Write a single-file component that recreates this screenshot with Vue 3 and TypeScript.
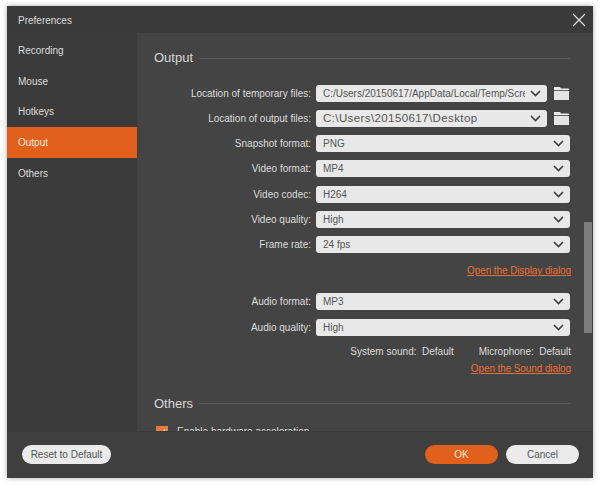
<script setup lang="ts">
const nav = ['Recording', 'Mouse', 'Hotkeys', 'Output', 'Others']
const videoRows = [
  { label: 'Snapshot format:', value: 'PNG' },
  { label: 'Video format:', value: 'MP4' },
  { label: 'Video codec:', value: 'H264' },
  { label: 'Video quality:', value: 'High' },
  { label: 'Frame rate:', value: '24 fps' },
]
const audioRows = [
  { label: 'Audio format:', value: 'MP3' },
  { label: 'Audio quality:', value: 'High' },
]
const pathRows = [
  { label: 'Location of temporary files:', value: 'C:/Users/20150617/AppData/Local/Temp/Scre', kind: 'long' },
  { label: 'Location of output files:', value: 'C:\\Users\\20150617\\Desktop', kind: 'wide' },
]
</script>

<template>
  <div class="page">
    <div class="window">
      <header class="titlebar">
        <span class="title">Preferences</span>
        <svg class="close" width="14" height="14" viewBox="0 0 14 14">
          <path d="M1 1L13 13M13 1L1 13" stroke="#e4e4e4" stroke-width="1.1" fill="none" />
        </svg>
      </header>
      <div class="body">
        <nav class="sidebar">
          <div v-for="item in nav" :key="item" class="nav-item" :class="{ active: item === 'Output' }">{{ item }}</div>
        </nav>
        <main class="content">
          <div class="section-head">
            <h2>Output</h2>
            <span class="rule"></span>
          </div>
          <div class="rows first">
            <div v-for="row in pathRows" :key="row.label" class="row">
              <label>{{ row.label }}</label>
              <div class="select short">
                <span class="value" :class="row.kind">{{ row.value }}</span>
                <svg class="chev" width="11" height="7" viewBox="0 0 11 7"><path d="M1 1L5.5 5.5L10 1" stroke="#3c3c3c" stroke-width="1.6" fill="none" /></svg>
              </div>
              <svg class="folder" width="15" height="13" viewBox="0 0 15 13">
                <path d="M0 0H6L7 1.5H15V3H0Z" fill="#ececec" />
                <rect x="0" y="3.8" width="15" height="9.2" fill="#e4e4e4" />
              </svg>
            </div>
            <div v-for="row in videoRows" :key="row.label" class="row">
              <label>{{ row.label }}</label>
              <div class="select">
                <span class="value">{{ row.value }}</span>
                <svg class="chev" width="11" height="7" viewBox="0 0 11 7"><path d="M1 1L5.5 5.5L10 1" stroke="#3c3c3c" stroke-width="1.6" fill="none" /></svg>
              </div>
            </div>
          </div>
          <div class="link-row display"><a>Open the Display dialog</a></div>
          <div class="rows audio">
            <div v-for="row in audioRows" :key="row.label" class="row">
              <label>{{ row.label }}</label>
              <div class="select">
                <span class="value">{{ row.value }}</span>
                <svg class="chev" width="11" height="7" viewBox="0 0 11 7"><path d="M1 1L5.5 5.5L10 1" stroke="#3c3c3c" stroke-width="1.6" fill="none" /></svg>
              </div>
            </div>
          </div>
          <div class="devices">
            <span class="device">System sound:&nbsp; Default</span>
            <span class="device">Microphone:&nbsp; Default</span>
          </div>
          <div class="link-row sound"><a>Open the Sound dialog</a></div>
          <div class="section-head others">
            <h2>Others</h2>
            <span class="rule"></span>
          </div>
          <div class="check-row">
            <span class="check">
              <svg width="10" height="10" viewBox="0 0 10 10"><path d="M2 5.2L4.2 7.5L8 2.5" stroke="#fff" stroke-width="1.4" fill="none" /></svg>
            </span>
            <span>Enable hardware acceleration</span>
          </div>
          <div class="scrollbar"></div>
        </main>
      </div>
      <footer class="footer">
        <button class="btn light reset">Reset to Default</button>
        <div class="actions">
          <button class="btn ok">OK</button>
          <button class="btn light cancel">Cancel</button>
        </div>
      </footer>
    </div>
  </div>
</template>

<style>
html, body { margin: 0; background: #fff; }
</style>

<style scoped>
.page {
  width: 600px;
  height: 485px;
  padding: 6px 7px 7px;
  box-sizing: border-box;
  font-family: "Liberation Sans", Arial, sans-serif;
  font-size: 10px;
  color: #dcdcdc;
  overflow: hidden;
}
.window {
  width: 586px;
  height: 472px;
  display: flex;
  flex-direction: column;
  background: #444;
  box-shadow: 0 0 5px rgba(0, 0, 0, 0.35);
  overflow: hidden;
}
.titlebar {
  flex: none;
  height: 27px;
  padding: 0 7px 0 11px;
  display: flex;
  align-items: center;
  justify-content: space-between;
  background: #3a3a3a;
}
.title { padding-top: 1px; }
.body { flex: 1; min-height: 0; display: flex; }
.sidebar {
  flex: none;
  width: 131px;
  padding-top: 2px;
  background: #3b3b3b;
  border-right: 1px solid #414141;
  box-sizing: border-box;
}
.nav-item {
  height: 30.75px;
  padding-left: 11px;
  display: flex;
  align-items: center;
}
.nav-item.active { background: #e0601c; color: #fbe7da; }
.content {
  position: relative;
  flex: 1;
  min-width: 0;
  padding: 16px 0 0 16px;
  overflow: hidden;
  background: #444;
}
.section-head { display: flex; align-items: center; gap: 6px; padding-right: 23px; }
.section-head h2 { margin: 0; font-size: 13px; font-weight: 400; line-height: 18px; color: #d8d8d8; }
.rule { flex: 1; height: 1px; background: #5a5a5a; }
.rows { display: flex; flex-direction: column; gap: 8.33px; }
.rows.first { margin-top: 17.5px; }
.row { display: flex; align-items: center; height: 17px; }
.row label { width: 157px; text-align: right; margin-right: 5px; white-space: nowrap; }
.select {
  width: 254px;
  height: 17px;
  box-sizing: border-box;
  padding: 0 7px;
  display: flex;
  align-items: center;
  justify-content: space-between;
  gap: 5px;
  background: #e8e8e8;
  border-radius: 3px;
  color: #555;
}
.select.short { width: 231px; }
.value { flex: 1; min-width: 0; overflow: hidden; white-space: nowrap; }
.value.wide { font-size: 11.5px; letter-spacing: 0.4px; }
.chev { flex: none; margin-right: -1px; }
.folder { margin-left: 7px; }
.link-row { display: flex; justify-content: flex-end; padding-right: 22px; }
.link-row a { color: #ea7035; text-decoration: underline; letter-spacing: -0.1px; }
.display { margin-top: 12px; height: 15px; }
.audio { margin-top: 12.5px; gap: 9px; }
.devices { display: flex; justify-content: flex-end; gap: 25px; padding-right: 22px; margin-top: 10px; height: 15px; }
.sound { margin-top: 2px; height: 15px; }
.others { margin-top: 17px; }
.check-row { display: flex; align-items: center; gap: 9px; margin-top: 13px; padding-left: 2px; }
.check {
  width: 12px;
  height: 12px;
  display: flex;
  align-items: center;
  justify-content: center;
  background: #ee7a35;
}
.scrollbar {
  position: absolute;
  right: 1px;
  top: 189px;
  width: 8px;
  height: 111px;
  background: #7d7d7d;
}
.footer {
  flex: none;
  height: 47px;
  padding: 0 14px 1px 15px;
  display: flex;
  align-items: center;
  justify-content: space-between;
  background: #3f3f3f;
  border-top: 1px solid #3a3a3a;
  box-sizing: border-box;
}
.actions { display: flex; gap: 8px; }
.btn {
  height: 19px;
  border: none;
  border-radius: 10px;
  padding: 0;
  font: inherit;
}
.light { background: #ebebeb; color: #555; }
.reset { width: 89px; }
.ok { width: 73px; background: #e0601c; color: #fbe7da; }
.cancel { width: 73px; }
</style>
